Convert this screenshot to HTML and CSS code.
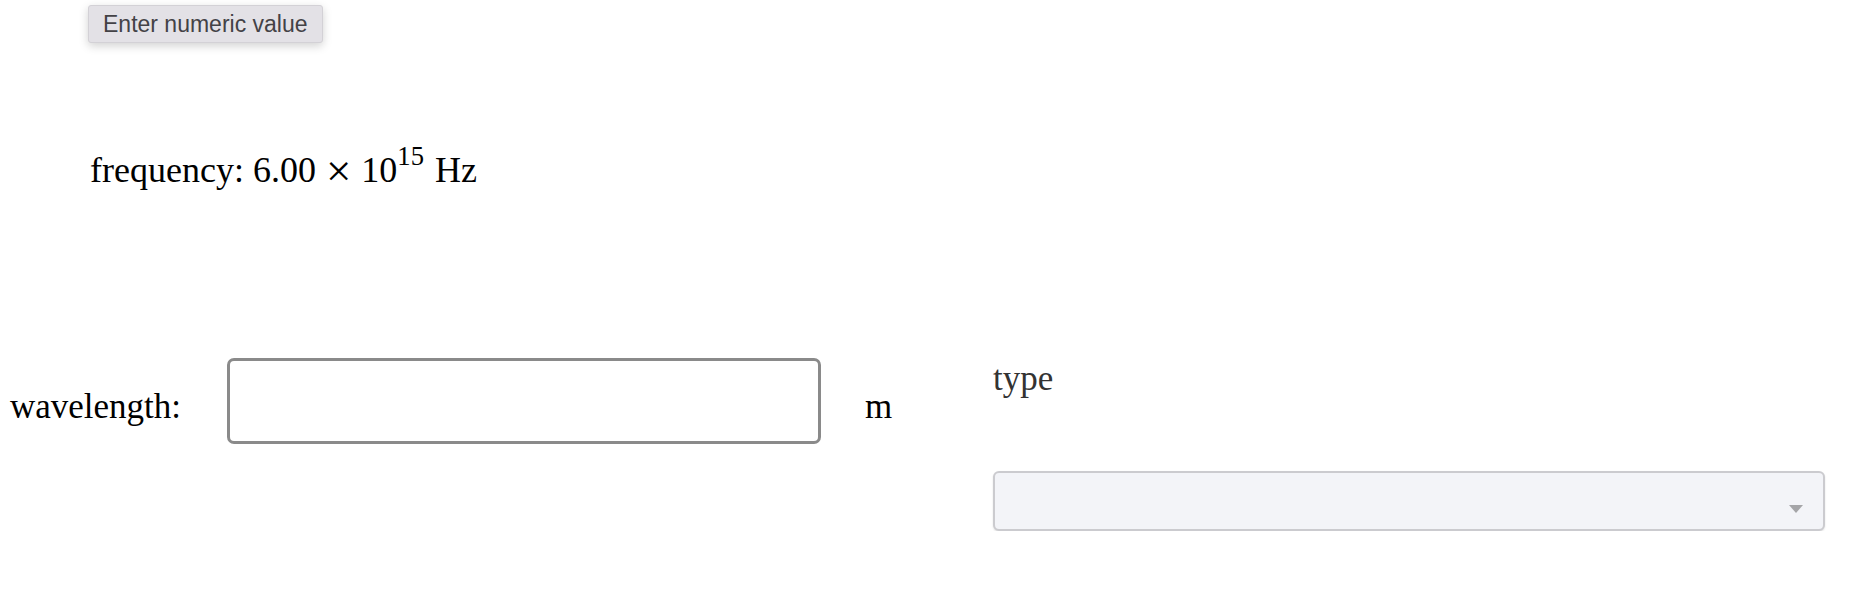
FILE: index.html
```html
<!DOCTYPE html>
<html>
<head>
<meta charset="utf-8">
<link rel="stylesheet" href="styles.css">
</head>
<body>
<div class="page">
  <div class="tooltip">Enter numeric value</div>
  <div class="freq">frequency: 6.00 <span class="times">×</span> 10<sup class="exp">15</sup> Hz</div>
  <div class="row">
    <div class="label">wavelength:</div>
    <div class="input"></div>
    <div class="unit">m</div>
    <div class="typecol">
      <div class="typelabel">type</div>
      <div class="select"><span class="arrow"></span></div>
    </div>
  </div>
</div>
</body>
</html>
```
FILE: styles.css
```css
html, body {
  margin: 0;
  padding: 0;
  background: #ffffff;
}
.page {
  position: relative;
  padding: 0 35px 0 10px;
  font-family: "Liberation Serif", "Times New Roman", serif;
  font-size: 35px;
  color: #000;
}
.tooltip {
  position: absolute;
  top: 5px;
  left: 88px;
  padding: 5px 14px 5px 14px;
  font-family: "Liberation Sans", Arial, sans-serif;
  font-size: 23px;
  line-height: 26px;
  color: #434246;
  background: #e3e1e6;
  border: 1px solid #d3d1d6;
  border-radius: 3px;
  box-shadow: 0 3px 10px rgba(0, 0, 0, 0.18);
}
.freq {
  padding-top: 150px;
  margin-left: 80px;
  font-size: 36px;
  line-height: 41px;
}
.times {
  display: inline-block;
  font-size: 1.25em;
  line-height: 0;
  vertical-align: -0.08em;
  margin: 0 1px;
}
.exp {
  font-size: 0.74em;
  vertical-align: 0;
  position: relative;
  top: -0.64em;
  line-height: 0;
  margin-right: 2px;
}
.row {
  display: flex;
  align-items: flex-start;
  margin-top: 167px;
}
.label {
  margin-top: 28px;
  line-height: 41px;
  width: 217px;
}
.input {
  width: 594px;
  height: 86px;
  box-sizing: border-box;
  border: 3px solid #8a8a8a;
  border-radius: 7px;
  background: #fff;
}
.unit {
  margin-top: 28px;
  margin-left: 44px;
  line-height: 41px;
  width: 128px;
}
.typecol {
  flex: 1;
  display: flex;
  flex-direction: column;
}
.typelabel {
  line-height: 41px;
  color: #333;
}
.select {
  margin-top: 72px;
  height: 60px;
  box-sizing: border-box;
  border: 2px solid #cbcbcf;
  border-radius: 6px;
  background: #f3f4f8;
  box-shadow: 0 1px 2px rgba(0, 0, 0, 0.12);
  display: flex;
  align-items: center;
  justify-content: flex-end;
  padding: 16px 20px 0 0;
}
.arrow {
  width: 0;
  height: 0;
  border-left: 7px solid transparent;
  border-right: 7px solid transparent;
  border-top: 8px solid #a5a5a8;
}
```
